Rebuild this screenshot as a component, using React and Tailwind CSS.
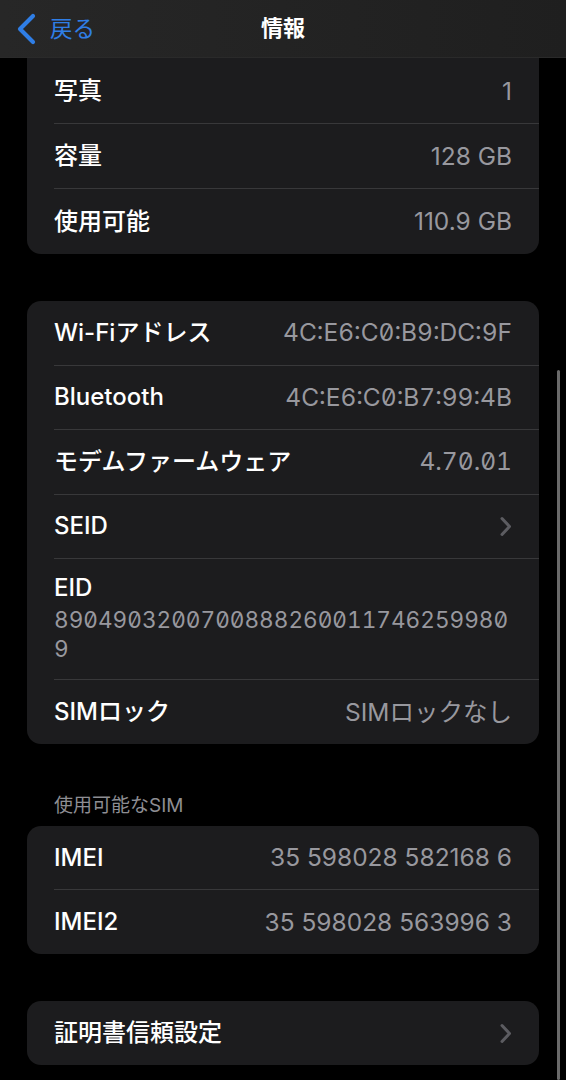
import React from "react";

const font = { fontFamily: '"Inter","Noto Sans CJK JP",sans-serif' };

const Chevron = () => (
    <svg width="13" height="21" viewBox="0 0 13 21" className="shrink-0">
        <path d="M3 2.5 L10.5 10.5 L3 18.5" fill="none" stroke="#5c5c61" strokeWidth="3" strokeLinecap="round" strokeLinejoin="round" />
    </svg>
);

const Row = ({ label, value, chevron, mono, last, h }) => {
    return (
        <div className={"flex pl-[27px] " + (h || "h-[64px]")}>
            <div className={"flex flex-1 items-center justify-between pr-[27px] " + (last ? "" : "border-b border-[#38383a]")}>
                <span className="text-[24px] text-white font-medium">{label}</span>
                {value && (
                    <span className={"text-[24.5px] text-[#98989e] " + (mono ? "slashed-zero tabular-nums" : "")}>{value}</span>
                )}
                {chevron && <Chevron />}
            </div>
        </div>
    );
};

const Card = ({ children, className }) => (
    <div className={"mx-[27px] bg-[#1c1c1e] overflow-hidden " + (className || "rounded-[14px]")}>{children}</div>
);

export default function App() {
    return (
        <div className="relative w-full h-[1080px] bg-black overflow-hidden" style={font}>
            <header className="h-[58px] flex items-center relative bg-gradient-to-r from-[#272727] to-[#1f1f1f] border-b border-[#2a2a2a]">
                <div className="flex items-center pl-[16px] gap-[12px]">
                    <svg width="22" height="32" viewBox="0 0 22 32">
                        <path d="M17 3 L4 16 L17 29" fill="none" stroke="#2f7ee6" strokeWidth="4.2" strokeLinecap="round" strokeLinejoin="round" />
                    </svg>
                    <span className="text-[22.5px] text-[#2f7ee6]">戻る</span>
                </div>
                <h1 className="absolute left-0 right-0 text-center text-[22px] font-bold text-white pointer-events-none">情報</h1>
            </header>

            <Card className="rounded-b-[14px] pt-[1px]">
                <Row label="写真" value="1" h="h-[65px]" />
                <Row label="容量" value="128 GB" h="h-[65px]" />
                <Row label="使用可能" value="110.9 GB" h="h-[65px]" last />
            </Card>

            <div className="h-[47px]" />

            <Card>
                <Row label="Wi-Fiアドレス" value="4C:E6:C0:B9:DC:9F" mono h="h-[64.5px]" />
                <Row label="Bluetooth" value="4C:E6:C0:B7:99:4B" mono h="h-[64.5px]" />
                <Row label="モデムファームウェア" value="4.70.01" mono h="h-[64.5px]" />
                <Row label="SEID" chevron h="h-[64.5px]" />
                <div className="flex pl-[27px]">
                    <div className="flex-1 flex flex-col pt-[12px] pb-[16px] pr-[27px] border-b border-[#38383a]">
                        <span className="text-[24px] leading-[34px] text-white font-medium">EID</span>
                        <span className="text-[22.6px] leading-[29px] text-[#98989e] break-all slashed-zero tabular-nums">89049032007008882600117462599809</span>
                    </div>
                </div>
                <Row label="SIMロック" value="SIMロックなし" last />
            </Card>

            <div className="pt-[50px] pb-[9px] pl-[54px] text-[19px] leading-[23px] text-[#8e8e93]">使用可能なSIM</div>

            <Card>
                <Row label="IMEI" value="35 598028 582168 6" />
                <Row label="IMEI2" value="35 598028 563996 3" last />
            </Card>

            <div className="h-[47px]" />

            <Card>
                <Row label="証明書信頼設定" chevron last />
            </Card>

            <div className="absolute right-[6px] top-[370px] bottom-0 w-[3px] rounded-full bg-[#6a6a6a]" />
        </div>
    );
}
